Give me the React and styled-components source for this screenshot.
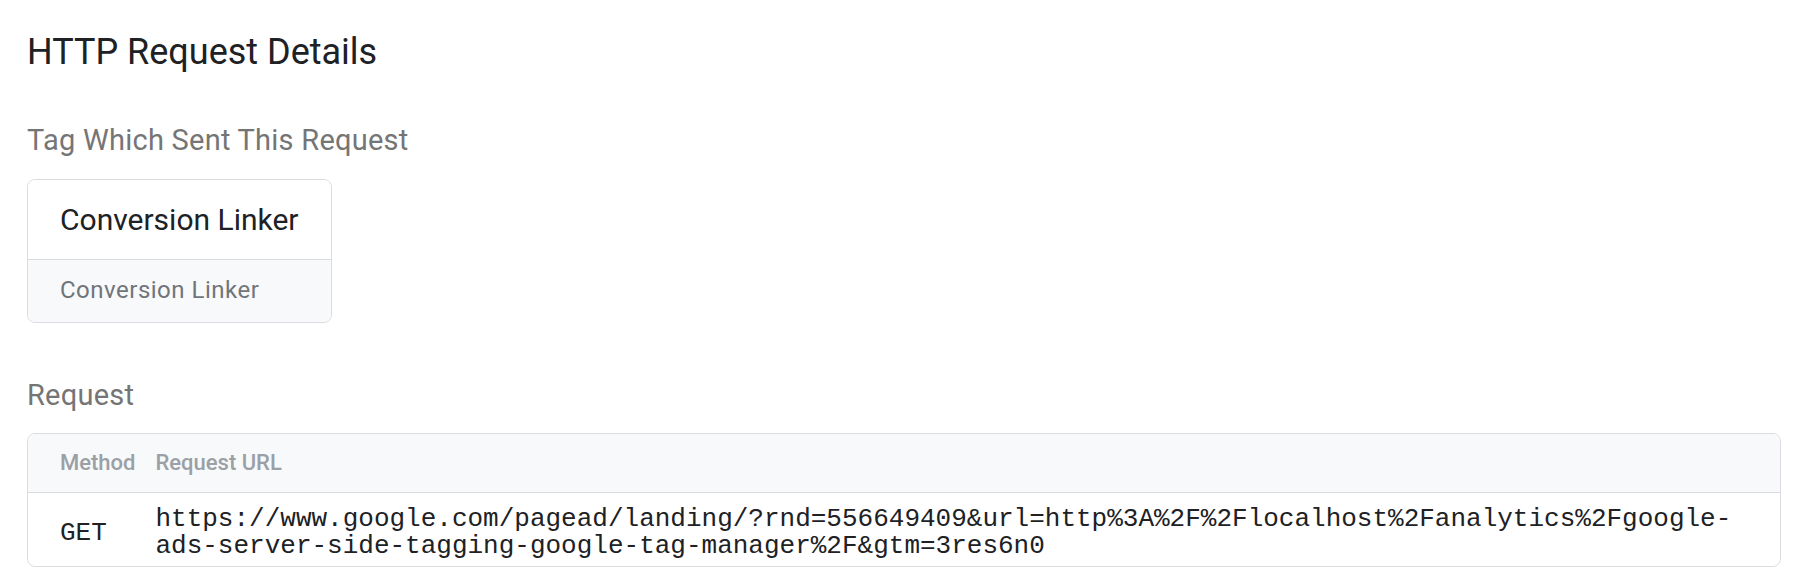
import React from "react";
import styled, { createGlobalStyle } from "styled-components";

const GlobalStyle = createGlobalStyle`
  html, body {
    margin: 0;
    padding: 0;
    background: #ffffff;
  }
  body {
    font-family: Roboto, "Noto Sans", Arial, sans-serif;
    color: #202124;
  }
`;

const Page = styled.div`
  padding: 30px 25px 0 27px;
`;

const Title = styled.h1`
  margin: 0;
  font-size: 36px;
  line-height: 44px;
  font-weight: 400;
  color: #202124;
`;

const SectionLabel = styled.h2`
  margin: ${(p) => p.$top}px 0 0 0;
  font-size: 29px;
  line-height: 36px;
  font-weight: 400;
  letter-spacing: 0.25px;
  color: #757575;
`;

const TagCard = styled.div`
  display: inline-flex;
  flex-direction: column;
  margin-top: 21px;
  border: 1px solid #dadce0;
  border-radius: 8px;
  overflow: hidden;
`;

const TagName = styled.div`
  padding: 22px 32px 21px 32px;
  font-size: 30px;
  line-height: 36px;
  color: #202124;
  background: #ffffff;
`;

const TagType = styled.div`
  padding: 14px 32px 16px 32px;
  border-top: 1px solid #dadce0;
  background: #f8f9fa;
  font-size: 24px;
  line-height: 32px;
  letter-spacing: 0.5px;
  color: #70757a;
`;

const TableWrap = styled.div`
  margin-top: 20px;
  border: 1px solid #dadce0;
  border-radius: 8px;
  overflow: hidden;
`;

const Table = styled.table`
  width: 100%;
  border-collapse: collapse;
  border-spacing: 0;
`;

const HeadCell = styled.th`
  padding: 15px 0 15px ${(p) => (p.$first ? 32 : 20)}px;
  padding-right: ${(p) => (p.$last ? 40 : 0)}px;
  width: ${(p) => (p.$first ? "1%" : "auto")};
  background: #f8f9fa;
  border-bottom: 1px solid #dadce0;
  text-align: left;
  white-space: nowrap;
  font-size: 22px;
  line-height: 28px;
  font-weight: 500;
  color: #9aa0a6;
`;

const Cell = styled.td`
  padding: 13px 0 6px ${(p) => (p.$first ? 32 : 20)}px;
  padding-right: ${(p) => (p.$last ? 40 : 0)}px;
  vertical-align: middle;
  font-family: "Liberation Mono", "DejaVu Sans Mono", monospace;
  font-size: 26px;
  line-height: 27px;
  color: #202124;
`;

const requestUrl =
  "https://www.google.com/pagead/landing/?rnd=556649409&url=http%3A%2F%2Flocalhost%2Fanalytics%2Fgoogle-ads-server-side-tagging-google-tag-manager%2F&gtm=3res6n0";

export default function App() {
  return (
    <>
      <GlobalStyle />
      <Page>
        <Title>HTTP Request Details</Title>

        <SectionLabel $top={48}>Tag Which Sent This Request</SectionLabel>
        <div>
          <TagCard>
            <TagName>Conversion Linker</TagName>
            <TagType>Conversion Linker</TagType>
          </TagCard>
        </div>

        <SectionLabel $top={54}>Request</SectionLabel>
        <TableWrap>
          <Table>
            <thead>
              <tr>
                <HeadCell $first>Method</HeadCell>
                <HeadCell $last>Request URL</HeadCell>
              </tr>
            </thead>
            <tbody>
              <tr>
                <Cell $first>GET</Cell>
                <Cell $last>{requestUrl}</Cell>
              </tr>
            </tbody>
          </Table>
        </TableWrap>
      </Page>
    </>
  );
}
